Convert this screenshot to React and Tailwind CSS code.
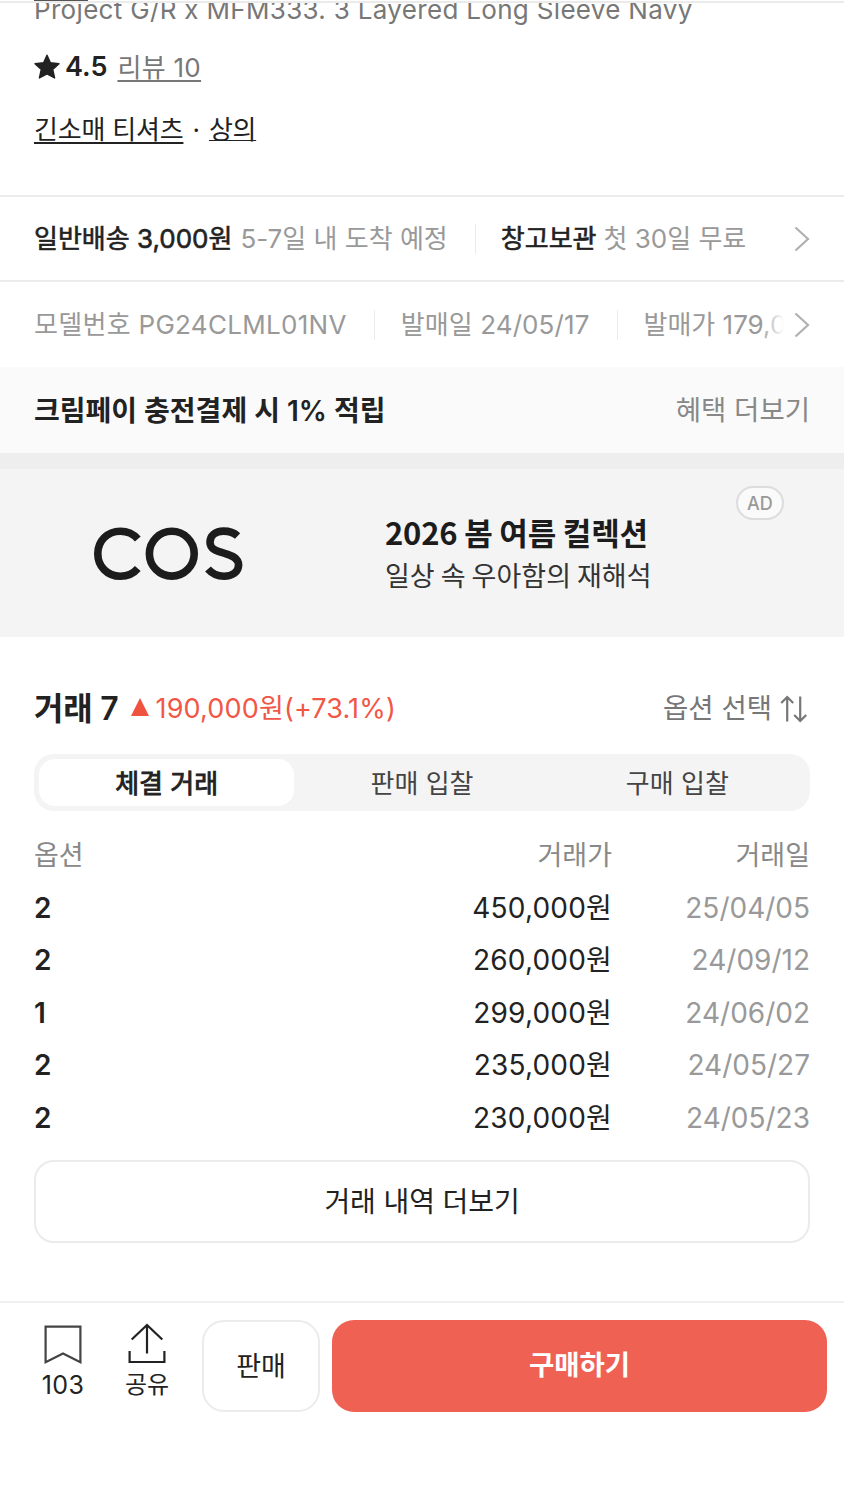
import { useState } from "react";

const trades = [
  { id: 1, option: "2", price: "450,000원", date: "25/04/05" },
  { id: 2, option: "2", price: "260,000원", date: "24/09/12" },
  { id: 3, option: "1", price: "299,000원", date: "24/06/02" },
  { id: 4, option: "2", price: "235,000원", date: "24/05/27" },
  { id: 5, option: "2", price: "230,000원", date: "24/05/23" },
];

const tabs = ["체결 거래", "판매 입찰", "구매 입찰"];

const Chevron = () => (
  <svg className="shrink-0" width="16" height="26" viewBox="0 0 16 26" fill="none" stroke="#b0b0b0" strokeWidth="2.2">
    <path d="M1.5 1.5L14 13L1.5 24.5" />
  </svg>
);

const Divider = () => <span className="h-[30px] w-px shrink-0 bg-[#ebebeb]" />;

const ProductInfo = () => (
  <section className="h-[195px] overflow-hidden">
    <div className="h-[3px] border-b-2 border-[#ebebeb] px-[34px]">
      <div className="h-px w-[54px] bg-[#555]" />
    </div>
    <div className="flex h-[25px] items-end overflow-hidden px-[34px]">
      <p className="text-[26px] leading-[36px] tracking-[0.32px] whitespace-nowrap text-[#777]">
        Project G/R x MFM333. 3 Layered Long Sleeve Navy
      </p>
    </div>

    <div className="mt-[19px] flex h-10 items-center px-[34px]">
      <svg width="26" height="26" viewBox="0 0 26 26" fill="#222" stroke="#222" strokeWidth="1.4" strokeLinejoin="round">
        <path d="M13 1.2L16.4 8.8L25 9.7L18.7 15.4L20.6 24L13 19.9L5.4 24L7.3 15.4L1 9.7L9.6 8.8Z" />
      </svg>
      <span className="ml-[5px] text-[27px] font-semibold">4.5</span>
      <a className="ml-[10px] text-[26px] tracking-[0.3px] text-[#777] underline decoration-2 underline-offset-[3px]">리뷰 10</a>
    </div>

    <div className="mt-[22px] flex h-10 items-center px-[34px] text-[26px] whitespace-nowrap">
      <a className="tracking-[-0.2px] underline decoration-2 underline-offset-[3px]">긴소매 티셔츠</a>
      <span className="mx-[9px]">·</span>
      <a className="tracking-[-0.3px] underline decoration-1 underline-offset-[1px]">상의</a>
    </div>
  </section>
);

const InfoRows = () => (
  <section className="whitespace-nowrap">
    <div className="flex h-[87px] items-center border-y-2 border-[#ebebeb] px-[34px] text-[26px]">
      <span className="[-webkit-text-stroke:0.6px_#222]">일반배송 3,000원</span>
      <span className="ml-2 text-[#999]">5-7일 내 도착 예정</span>
      <span className="mr-[25px] ml-[27px] flex"><Divider /></span>
      <span className="[-webkit-text-stroke:0.6px_#222]">창고보관</span>
      <span className="ml-[7px] text-[#999]">첫 30일 무료</span>
      <span className="ml-auto flex"><Chevron /></span>
    </div>

    <div className="flex h-[85px] items-center px-[34px] text-[26px] text-[#999]">
      <div className="relative flex w-[750px] items-center overflow-hidden">
        <span className="tracking-[0.3px]">모델번호 PG24CLML01NV</span>
        <span className="mr-[26px] ml-[27px] flex"><Divider /></span>
        <span className="tracking-[0.1px]">발매일 24/05/17</span>
        <span className="mr-[26px] ml-[27px] flex"><Divider /></span>
        <span>발매가 179,000원</span>
        <div className="absolute inset-y-0 right-0 w-[20px] bg-linear-to-r from-white/20 to-white" />
      </div>
      <span className="ml-auto flex"><Chevron /></span>
    </div>

    <div className="flex h-[86px] items-center justify-between bg-[#fafafa] px-[34px] pt-px text-[28px]">
      <span className="font-semibold">크림페이 충전결제 시 1% 적립</span>
      <span className="text-[27.5px] text-[#888]">혜택 더보기</span>
    </div>
    <div className="h-4 bg-[#eee]" />
  </section>
);

const Banner = () => (
  <section className="relative flex h-[168px] items-center bg-[#f4f4f4] text-[#1c1c1c]">
    <svg className="ml-[93px]" width="152" height="56" viewBox="0 0 152 56" fill="none" stroke="#1c1c1c" strokeWidth="7.6">
      <path d="M44.8 14C40.5 9 34.5 6.2 27.3 6.2C14.4 6.2 4.8 16 4.8 28.7C4.8 41.4 14.4 51.2 27.3 51.2C34.5 51.2 40.5 48.4 44.8 43.4" />
      <circle cx="78.8" cy="28.7" r="22.4" />
      <path d="M144.6 11C141 7.6 136.3 6.1 130.5 6.1C122.5 6.1 117 10.6 117 17.2C117 24.4 124 26.2 131.5 28.3C139 30.4 145.6 33 145.6 40C145.6 47 139.2 51.2 131 51.2C124.3 51.2 119 48.6 115 44" />
    </svg>
    <div className="ml-[140px] whitespace-nowrap">
      <p className="font-['Noto_Sans_CJK_KR',sans-serif] text-[31px] leading-[43px] font-bold tracking-[-0.2px]">2026 봄 여름 컬렉션</p>
      <p className="font-['Noto_Sans_CJK_KR',sans-serif] text-[27px] leading-[43px] text-[#333]">일상 속 우아함의 재해석</p>
    </div>
    <span className="absolute top-[17px] right-[60px] flex h-[34px] w-12 items-center justify-center rounded-full border-2 border-[#ddd] bg-[#fafafa] text-[18px] font-medium text-[#999]">
      AD
    </span>
  </section>
);

const TradeHistory = () => {
  const [active, setActive] = useState(0);

  return (
    <section className="h-[664px] px-[34px] pt-[47px]">
      <div className="flex h-[50px] items-center whitespace-nowrap">
        <h2 className="text-[32px] font-semibold tracking-[-0.2px]">거래 7</h2>
        <svg className="mb-1 ml-3" width="18" height="18" viewBox="0 0 18 18" fill="#ef5340">
          <path d="M9 0L18 18H0Z" />
        </svg>
        <span className="ml-[7px] text-[27px] tracking-[0.15px] text-[#f15746]">190,000원(+73.1%)</span>
        <button className="mr-[3px] ml-auto flex items-center gap-2 text-[27.5px] text-[#777]">
          옵션 선택
          <svg width="27" height="28" viewBox="0 0 27 28" fill="none" stroke="#777" strokeWidth="2.2">
            <path d="M7.2 26.5V2M1.2 8L7.2 2L13.2 8M20.2 1.5V26M14.2 20L20.2 26L26.2 20" />
          </svg>
        </button>
      </div>

      <div className="mt-[20px] flex h-[57px] rounded-[20px] bg-[#f4f4f4] p-[5px]">
        {tabs.map((tab, i) => (
          <button
            key={tab}
            onClick={() => setActive(i)}
            className={
              i === active
                ? "flex-1 rounded-2xl bg-white pt-0.5 text-[26px] leading-none [-webkit-text-stroke:0.9px_#222]"
                : "flex-1 pt-0.5 text-[26px] leading-none text-[#444]"
            }
          >
            {tab}
          </button>
        ))}
      </div>

      <div className="mt-[18px]">
        <div className="flex h-[52.5px] items-center pt-0.5 text-[27px] text-[#888]">
          <span className="flex-1">옵션</span>
          <span>거래가</span>
          <span className="w-[198px] text-right">거래일</span>
        </div>
        {trades.map((trade) => (
          <div key={trade.id} className="flex h-[52.5px] items-center text-[28px]">
            <span className="flex-1 font-semibold">{trade.option}</span>
            <span className="tracking-[0.2px]">{trade.price}</span>
            <span className="w-[198px] text-right text-[#999]">{trade.date}</span>
          </div>
        ))}
      </div>

      <button className="mt-4 flex h-[83px] w-full items-center justify-center rounded-[20px] border-2 border-[#ebebeb] text-[28px] tracking-[-0.1px]">
        거래 내역 더보기
      </button>
    </section>
  );
};

const BottomBar = () => (
  <footer className="flex h-[199px] border-t-2 border-[#f0f0f0] pt-[16px] whitespace-nowrap">
    <button className="ml-[21px] flex h-[84px] w-[84px] flex-col items-center pt-[6px]">
      <svg width="38" height="39" viewBox="0 0 38 39" fill="none" stroke="#444" strokeWidth="2.2">
        <path d="M1.6 1.6H36.4V37.2L19 28.4L1.6 37.2Z" />
      </svg>
      <span className="mt-[5px] text-[25px] leading-[32px] tracking-[0.3px]">103</span>
    </button>
    <button className="flex h-[84px] w-[84px] flex-col items-center pt-[4px]">
      <svg width="38" height="41" viewBox="0 0 38 41" fill="none" stroke="#222" strokeWidth="2.2">
        <path d="M19 30.5V2M3.7 16.5L19 2L34.3 16.5M1.6 28V39H36.4V28" />
      </svg>
      <span className="mt-[5px] text-[24px] leading-[32px]">공유</span>
    </button>
    <button className="mt-px ml-[13px] h-[92px] w-[118px] rounded-[22px] border-2 border-[#ebebeb] pt-0.5 text-[27px]">판매</button>
    <button className="mt-px ml-[12px] h-[92px] w-[495px] rounded-[22px] bg-[#ef6253] text-[27.5px] font-semibold text-white">
      구매하기
    </button>
  </footer>
);

const App = () => (
  <div className="h-[1500px] w-[844px] overflow-hidden bg-white font-['Inter','Noto_Sans_CJK_KR',sans-serif] text-[#222]">
    <ProductInfo />
    <InfoRows />
    <Banner />
    <TradeHistory />
    <BottomBar />
  </div>
);

export default App;
